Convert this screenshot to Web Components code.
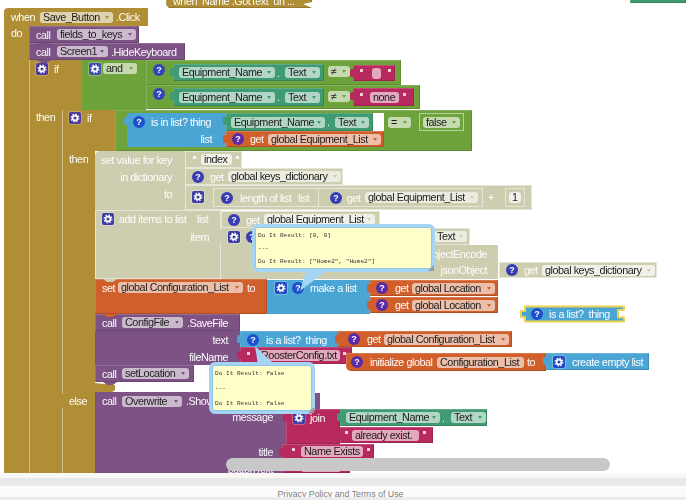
<!DOCTYPE html>
<html lang="en">
<head>
<meta charset="utf-8">
<title>Blocks workspace</title>
<style>
html,body{margin:0;padding:0;background:#fff;overflow:hidden}
body{width:686px;height:500px;font-family:"Liberation Sans",Arial,sans-serif}
</style>
</head>
<body>
<template id="t-block"><style>
:host{position:absolute;box-sizing:border-box;display:flex;align-items:center;background:var(--c);color:#fff;
 box-shadow:inset 1px 1px 0 rgba(255,255,255,.16),inset -1px -1px 0 rgba(0,0,0,.14)}
:host([flat]){box-shadow:none}
:host([line]){box-shadow:inset 1px 0 0 rgba(255,255,255,.42)}
:host([out]){box-shadow:inset 0 0 0 1px rgba(255,255,255,.5)}
:host([tab])::before{content:"";position:absolute;left:-3px;top:4px;width:4px;height:8px;background:var(--c);border-radius:2px 0 0 2px}
:host([notch])::after{content:"";position:absolute;left:8px;bottom:-3px;width:14px;height:3px;background:var(--c);clip-path:polygon(0 0,100% 0,70% 100%,30% 100%);z-index:1}
</style><slot></slot></template>

<template id="t-label"><style>
:host{display:block;flex:none;font-size:10.8px;line-height:12px;letter-spacing:-.45px;white-space:pre;color:inherit;opacity:.97}
</style><slot></slot></template>

<template id="t-field"><style>
:host{display:flex;align-items:center;flex:none;box-sizing:border-box;height:11px;padding:0 3px;border-radius:3px;background:rgba(255,255,255,.6);
 color:#1c1c1c;font-size:10.8px;line-height:11px;letter-spacing:-.45px;white-space:pre;position:relative;overflow:hidden}
i{position:absolute;right:4px;top:4px;width:0;height:0;border:2px solid transparent;border-top:3px solid var(--c);border-bottom:0}
:host([nc]) i{display:none}
</style><slot></slot><i></i></template>

<template id="t-help"><style>
:host{display:block;flex:none;width:12px;height:12px;border-radius:50%;background:var(--ic,#3a3cb4);color:#fff;font:bold 9px/12px "Liberation Sans",Arial,sans-serif;text-align:center}
</style>?</template>

<template id="t-gear"><style>
:host{display:block;flex:none;width:12px;height:12px;border-radius:2px;background:var(--ic,#3d3da8);box-shadow:0 0 0 1px rgba(255,255,255,.25)}
svg{display:block}
</style><svg width="12" height="12" viewBox="0 0 12 12"><circle cx="6" cy="6" r="2.4" fill="none" stroke="#fff" stroke-width="1.7"/><circle cx="6" cy="6" r="3.9" fill="none" stroke="#fff" stroke-width="1.1" stroke-dasharray="1.6 1.45"/></svg></template>

<template id="t-quote"><style>
:host{display:block;flex:none;width:3px;height:3px;margin-top:-5px;background:rgba(255,255,255,.78)}
</style></template>

<template id="t-tip"><style>
:host{position:absolute;box-sizing:border-box;display:flex;flex-direction:column;justify-content:space-between;background:#ffffc9;border:3px solid #a5d5f2;border-radius:6px;
 box-shadow:0 0 0 1px #8cc6ea inset;padding:5px 3px 3px;font:6.1px/8px "Liberation Mono","Courier New",monospace;color:#333;white-space:pre;z-index:5}
svg{position:absolute;left:-3px;top:-3px;overflow:visible;pointer-events:none}
b{position:absolute;right:-2px;bottom:-2px;border:3px solid transparent;border-right-color:#9a9a9a;border-bottom-color:#9a9a9a}
</style><svg width="1" height="1"><polygon fill="#a5d5f2"/></svg><slot></slot><b></b></template>

<template id="t-hl"><style>
:host{position:absolute;left:519px;top:305px;width:106px;height:18px;display:flex;align-items:center;padding-left:12px;box-sizing:border-box;color:#fff}
svg{position:absolute;left:0;top:0}
::slotted(*){position:relative}
</style><svg width="106" height="18" viewBox="0 0 106 18"><path d="M6 1.5H105V5H99V12.5H105V16.5H6V12H2V6H6Z" fill="#4aa5d5" stroke="#ecd24f" stroke-width="2" stroke-linejoin="round"/></svg><slot></slot></template>

<template id="t-canvas"><style>
:host{display:block;position:relative;width:686px;height:473px;overflow:hidden;background:#fff;filter:blur(.3px);
 --gold:#b08e35;--purple:#7d5386;--green:#6ea33c;--teal:#409a72;--pink:#b7295f;--blue:#4aa5d5;--orange:#d05f2c;--beige:#cdcdb0}
</style><slot></slot></template>

<template id="t-scroll"><style>
:host{position:absolute;left:226px;top:458px;width:384px;height:13px;border-radius:7px;background:#c8c8c8;z-index:6}
</style></template>

<template id="t-footer"><style>
:host{display:flex;flex-direction:column;height:27px;overflow:hidden;background:#f8f8f6;color:#7f7f7f;font:8.8px/12px "Liberation Sans",Arial,sans-serif}
.band{height:8px;margin-top:5px;background:#e9e9e9;flex:none}
.txt{flex:none;height:9px;overflow:visible;text-align:center;padding-top:2px;padding-right:5px;background:#fbfbfb;box-sizing:content-box}
.bar{flex:1;background:#ececec;position:relative;z-index:1}
</style><div class="band"></div><div class="txt"><slot></slot></div><div class="bar"></div></template>

<ai-canvas>
  <!-- loose blocks at the top -->
  <ai-b x="166" y="-7" w="146" h="15" c="gold" pl="7" cut><ai-l>when  Name .GotText  un ...</ai-l></ai-b>
  <ai-b x="630" y="-1" w="56" h="4" c="teal"></ai-b>

  <!-- when block -->
  <ai-b x="4" y="26" w="25" h="447" c="gold" pt="1" pl="7" flat><ai-l>do</ai-l></ai-b>
  <ai-b x="4" y="8" w="144" h="18" c="gold" pl="7" flat rad="4 0 0 0"><ai-l w="29">when</ai-l><ai-f w="73">Save_Button</ai-f><ai-l ml="3">.Click</ai-l></ai-b>
  <ai-b x="29" y="26" w="110" h="17" c="purple" pl="7" notch><ai-l w="21">call</ai-l><ai-f w="79">fields_to_keys</ai-f></ai-b>
  <ai-b x="29" y="43" w="156" h="17" c="purple" pl="7" notch><ai-l w="21">call</ai-l><ai-f w="51">Screen1</ai-f><ai-l ml="3">.HideKeyboard</ai-l></ai-b>

  <!-- outer if -->
  <ai-b x="29" y="110" w="33" h="363" c="gold" pl="7" pt="1" line><ai-l>then</ai-l></ai-b>
  <ai-b x="29" y="60" w="53" h="50" c="gold" pl="7" pt="3" line><ai-g ic="#4b3a9c"></ai-g><ai-l ml="6">if</ai-l></ai-b>
  <ai-b x="82" y="60" w="64" h="50" c="green" pl="7" pt="3" flat><ai-g ic="#3f4cb0"></ai-g><ai-f ml="2" w="34" style="--c:#6ea33c">and</ai-f></ai-b>
  <ai-b x="146" y="60" w="255" h="25" c="green" pl="7" pt="4"><ai-h ic="#2f45b8"></ai-h></ai-b>
  <ai-b x="146" y="85" w="274" h="24" c="green" pl="7" pt="3"><ai-h ic="#2f45b8"></ai-h></ai-b>
  <ai-b x="173" y="64" w="151" h="17" c="teal" pl="6" tab><ai-f w="96">Equipment_Name</ai-f><ai-l ml="2" w="8">.</ai-l><ai-f w="35">Text</ai-f></ai-b>
  <ai-f abs x="328" y="66" w="22" style="--c:#6ea33c">≠</ai-f>
  <ai-b x="353" y="65" w="42" h="16" c="pink" pl="7" tab><ai-q></ai-q><ai-f nc ml="9" w="9"></ai-f><ai-q ml="7"></ai-q></ai-b>
  <ai-b x="173" y="88" w="151" h="18" c="teal" pl="6" tab><ai-f w="96">Equipment_Name</ai-f><ai-l ml="2" w="8">.</ai-l><ai-f w="35">Text</ai-f></ai-b>
  <ai-f abs x="328" y="91" w="22" style="--c:#6ea33c">≠</ai-f>
  <ai-b x="353" y="88" w="61" h="18" c="pink" pl="7" tab><ai-q></ai-q><ai-f nc ml="7" w="29">none</ai-f><ai-q ml="4"></ai-q></ai-b>

  <!-- inner if -->
  <ai-b x="62" y="151" w="33" h="322" c="gold" pl="7" pt="2" line><ai-l>then</ai-l></ai-b>
  <ai-b x="62" y="394" w="33" h="14" c="gold" pl="7" flat><ai-l>else</ai-l></ai-b>
  <ai-b x="62" y="110" w="53" h="41" c="gold" pl="7" pt="2" line><ai-g ic="#4b3a9c"></ai-g><ai-l ml="6">if</ai-l></ai-b>
  <ai-b x="115" y="110" w="357" h="41" c="green"></ai-b>
  <ai-b x="127" y="113" w="99" h="17" c="blue" pl="6" flat tab><ai-h ic="#1c50cf"></ai-h><ai-l ml="6">is in list? thing</ai-l></ai-b>
  <ai-b x="127" y="130" w="99" h="17" c="blue" end="14" flat><ai-l>list</ai-l></ai-b>
  <ai-b x="226" y="113" w="147" h="18" c="teal" pl="5" tab><ai-f w="94">Equipment_Name</ai-f><ai-l ml="2" w="8">.</ai-l><ai-f w="34">Text</ai-f></ai-b>
  <ai-b x="373" y="113" w="11" h="18" c="white" flat></ai-b>
  <ai-b x="226" y="131" w="158" h="16" c="orange" pl="6" tab><ai-h ic="#5b2aa6"></ai-h><ai-l ml="6" w="18">get</ai-l><ai-f w="113">global Equipment_List</ai-f></ai-b>
  <ai-f abs x="388" y="117" w="23" style="--c:#6ea33c">=</ai-f>
  <ai-b x="419" y="113" w="45" h="18" c="green" pl="4" out><ai-f w="37" style="--c:#6ea33c">false</ai-f></ai-b>

  <!-- set value for key -->
  <ai-b x="95" y="151" w="90" h="59" c="beige" flat rad="5 0 0 0"></ai-b>
  <ai-b x="96" y="153" w="89" h="14" c="beige" end="13" flat><ai-l>set value for key</ai-l></ai-b>
  <ai-b x="95" y="170" w="90" h="14" c="beige" end="13" flat><ai-l>in dictionary</ai-l></ai-b>
  <ai-b x="95" y="187" w="90" h="14" c="beige" end="13" flat><ai-l>to</ai-l></ai-b>
  <ai-b x="185" y="151" w="57" h="17" c="beige" pl="4" out><ai-q ml="4"></ai-q><ai-f nc ml="5" w="31" style="background:rgba(255,255,255,.72)">index</ai-f><ai-q ml="4"></ai-q></ai-b>
  <ai-b x="185" y="168" w="158" h="17" c="beige" pl="7" out><ai-h></ai-h><ai-l ml="6" w="18">get</ai-l><ai-f w="113">global keys_dictionary</ai-f></ai-b>
  <ai-b x="185" y="185" w="347" h="25" c="beige" pl="7" pt="6" out><ai-g></ai-g></ai-b>
  <ai-b x="213" y="188" w="270" h="19" c="beige" pl="8" out><ai-h></ai-h><ai-l ml="7" w="58">length of list</ai-l><ai-l w="20">list</ai-l></ai-b>
  <ai-b x="318" y="188" w="165" h="19" c="beige" pl="12" out><ai-h></ai-h><ai-l ml="5" w="18">get</ai-l><ai-f w="113">global Equipment_List</ai-f></ai-b>
  <ai-b x="488" y="190" w="12" h="14" c="beige" flat><ai-l>+</ai-l></ai-b>
  <ai-b x="505" y="188" w="20" h="19" c="beige" pl="4" out><ai-f nc w="12" style="background:rgba(255,255,255,.72);padding:0 3px">1</ai-f></ai-b>

  <!-- add items to list -->
  <ai-b x="95" y="210" w="126" h="69" c="beige" pl="7" pt="3" notch out><ai-g></ai-g><ai-l ml="5" w="78">add items to list</ai-l><ai-l>list</ai-l></ai-b>
  <ai-b x="150" y="230" w="71" h="14" c="beige" end="12" flat><ai-l>item</ai-l></ai-b>
  <ai-b x="221" y="211" w="159" h="17" c="beige" pl="7" out><ai-h></ai-h><ai-l ml="6" w="18">get</ai-l><ai-f w="111" style="background:rgba(255,255,255,.72)">global Equipment_List</ai-f></ai-b>
  <ai-b x="221" y="228" w="249" h="51" c="beige" pl="7" pt="3" flat><ai-g></ai-g><ai-h ml="6"></ai-h></ai-b>
  <ai-b x="431" y="228" w="39" h="17" c="beige" pl="3" out><ai-f w="33" style="background:rgba(255,255,255,.62)">Text</ai-f></ai-b>
  <ai-b x="400" y="245" w="98" h="34" c="beige" flat></ai-b>
  <ai-b x="400" y="247" w="98" h="14" c="beige" end="11" flat><ai-l>objectEncode</ai-l></ai-b>
  <ai-b x="400" y="263" w="98" h="14" c="beige" end="11" flat><ai-l>jsonObject</ai-l></ai-b>
  <ai-b x="499" y="262" w="158" h="16" c="beige" pl="7" out><ai-h></ai-h><ai-l ml="6" w="18">get</ai-l><ai-f w="113" style="background:rgba(255,255,255,.72)">global keys_dictionary</ai-f></ai-b>

  <!-- set global -->
  <ai-b x="95" y="279" w="172" h="35" c="orange" pl="7" pt="3" notch><ai-l w="16">set</ai-l><ai-f w="125">global Configuration_List</ai-f><ai-l ml="4">to</ai-l></ai-b>
  <ai-b x="267" y="280" w="103" h="34" c="blue" pl="8" pt="2" flat><ai-g ic="#2248c4"></ai-g><ai-h ml="5" ic="#1c50cf"></ai-h><ai-l ml="6">make a list</ai-l></ai-b>
  <ai-b x="370" y="280" w="128" h="16" c="orange" pl="6" tab><ai-h ic="#5b2aa6"></ai-h><ai-l ml="7" w="17">get</ai-l><ai-f w="83">global Location</ai-f></ai-b>
  <ai-b x="370" y="297" w="128" h="16" c="orange" pl="6" tab><ai-h ic="#5b2aa6"></ai-h><ai-l ml="7" w="17">get</ai-l><ai-f w="83">global Location</ai-f></ai-b>

  <!-- loose highlighted block -->
  <ai-hl><ai-h ic="#1c50cf"></ai-h><ai-l ml="6">is a list?  thing</ai-l></ai-hl>

  <!-- call ConfigFile -->
  <ai-b x="95" y="314" w="145" h="17" c="purple" pl="7" notch><ai-l w="20">call</ai-l><ai-f w="61">ConfigFile</ai-f><ai-l ml="4">.SaveFile</ai-l></ai-b>
  <ai-b x="95" y="331" w="145" h="17" c="purple" end="12" flat><ai-l>text</ai-l></ai-b>
  <ai-b x="95" y="348" w="145" h="17" c="purple" end="12" flat><ai-l>fileName</ai-l></ai-b>
  <ai-b x="240" y="331" w="98" h="17" c="blue" pl="7" tab><ai-h ic="#1c50cf"></ai-h><ai-l ml="7">is a list?  thing</ai-l></ai-b>
  <ai-b x="338" y="331" w="174" h="16" c="orange" pl="10" tab><ai-h ic="#5b2aa6"></ai-h><ai-l ml="7" w="17">get</ai-l><ai-f w="125">global Configuration_List</ai-f></ai-b>
  <ai-b x="240" y="347" w="112" h="17" c="pink" pl="5" tab><ai-q ml="2"></ai-q><ai-f nc ml="8" w="82">RoosterConfig.txt</ai-f><ai-q ml="3"></ai-q></ai-b>
  <ai-b x="346" y="353" w="200" h="18" c="orange" pl="5" rad="0 0 0 5"><ai-h ic="#5b2aa6"></ai-h><ai-l ml="7" w="67">initialize global</ai-l><ai-f nc w="87">Configuration_List</ai-f><ai-l ml="3">to</ai-l></ai-b>
  <ai-b x="546" y="353" w="103" h="17" c="blue" pl="7" tab><ai-g ic="#2248c4"></ai-g><ai-l ml="7">create empty list</ai-l></ai-b>

  <ai-b x="95" y="365" w="99" h="17" c="purple" pl="7" notch><ai-l w="20">call</ai-l><ai-f w="67">setLocation</ai-f></ai-b>
  <ai-b x="95" y="383" w="20" h="10" c="gold" flat cutn></ai-b>

  <!-- else: call Overwrite -->
  <ai-b x="95" y="392" w="191" h="81" c="purple" flat></ai-b>
  <ai-b x="95" y="393" w="225" h="16" c="purple" pl="7" flat><ai-l w="20">call</ai-l><ai-f w="60">Overwrite</ai-f><ai-l ml="4">.Show</ai-l></ai-b>
  <ai-b x="95" y="410" w="191" h="14" c="purple" end="13" flat><ai-l>message</ai-l></ai-b>
  <ai-b x="95" y="445" w="191" h="14" c="purple" end="13" flat><ai-l>title</ai-l></ai-b>
  <ai-b x="95" y="462" w="191" h="14" c="purple" end="13" flat><ai-l>buttonText</ai-l></ai-b>
  <ai-b x="286" y="409" w="54" h="35" c="pink" pl="7" pt="3" tab><ai-g ic="#3d3da8"></ai-g><ai-l ml="5">join</ai-l></ai-b>
  <ai-b x="340" y="409" w="147" h="17" c="teal" pl="6" tab><ai-f w="94">Equipment_Name</ai-f><ai-l ml="2" w="9">.</ai-l><ai-f w="35">Text</ai-f></ai-b>
  <ai-b x="340" y="427" w="93" h="16" c="pink" pl="5" tab><ai-q></ai-q><ai-f nc ml="4" w="67">already exist.</ai-f><ai-q ml="4"></ai-q></ai-b>
  <ai-b x="282" y="444" w="92" h="15" c="pink" pl="7" tab><ai-q ml="3"></ai-q><ai-f nc ml="6" w="62">Name Exists</ai-f><ai-q ml="4"></ai-q></ai-b>
  <ai-b x="282" y="459" w="68" h="14" c="pink" pl="7" tab><ai-q ml="3"></ai-q><ai-f nc ml="6" w="40">Cancel</ai-f></ai-b>

  <!-- do-it results -->
  <ai-tip x="252" y="224" w="183" h="48" tail="54,47 74,47 48,67"><span>Do It Result: [0, 0]</span><span>---</span><span>Do It Result: ["Home2", "Home2"]</span></ai-tip>
  <ai-tip x="209" y="362" w="106" h="52" tail="46,-16 49,3 66,3"><span>Do It Result: false</span><span>---</span><span>Do It Result: false</span></ai-tip>

  <ai-scroll></ai-scroll>
</ai-canvas>
<ai-footer>Privacy Policy and Terms of Use</ai-footer>

<script>
function mount(host,id){
  const r=host.attachShadow({mode:'open'});
  r.appendChild(document.getElementById(id).content.cloneNode(true));
  return r;
}
function size(el){
  const a=n=>el.getAttribute(n);
  if(a('w')) el.style.width=a('w')+'px';
  if(a('ml')) el.style.marginLeft=a('ml')+'px';
  if(a('ic')) el.style.setProperty('--ic',a('ic'));
}
class AiCanvas extends HTMLElement{constructor(){super();mount(this,'t-canvas');}}
class AiBlock extends HTMLElement{
  constructor(){super();mount(this,'t-block');}
  connectedCallback(){
    const s=this.style,a=n=>this.getAttribute(n);
    s.left=a('x')+'px';s.top=a('y')+'px';s.width=a('w')+'px';s.height=a('h')+'px';
    const c=a('c');s.setProperty('--c',c==='white'?'#fff':'var(--'+c+')');
    if(a('pl'))s.paddingLeft=a('pl')+'px';
    if(a('pt')){s.paddingTop=a('pt')+'px';s.alignItems='flex-start';}
    if(a('end')){s.justifyContent='flex-end';s.paddingRight=a('end')+'px';}
    if(a('rad'))s.borderRadius=a('rad').split(' ').map(v=>v+'px').join(' ');
    if(this.hasAttribute('cut'))s.clipPath='polygon(0 0,100% 0,100% 9px,94% 11px,100% 15px,3px 15px,0 12px)';
    if(this.hasAttribute('cutn'))s.clipPath='polygon(0 0,100% 20%,100% 70%,80% 100%,0 100%)';
  }
}
class AiLabel extends HTMLElement{constructor(){super();mount(this,'t-label');}connectedCallback(){size(this);}}
class AiField extends HTMLElement{
  constructor(){super();mount(this,'t-field');}
  connectedCallback(){
    size(this);
    if(this.hasAttribute('abs')){this.style.position='absolute';this.style.left=this.getAttribute('x')+'px';this.style.top=this.getAttribute('y')+'px';}
  }
}
class AiHelp extends HTMLElement{constructor(){super();mount(this,'t-help');}connectedCallback(){size(this);}}
class AiGear extends HTMLElement{constructor(){super();mount(this,'t-gear');}connectedCallback(){size(this);}}
class AiQuote extends HTMLElement{constructor(){super();mount(this,'t-quote');}connectedCallback(){size(this);}}
class AiTip extends HTMLElement{
  constructor(){super();this.r=mount(this,'t-tip');}
  connectedCallback(){
    const s=this.style,a=n=>this.getAttribute(n);
    s.left=a('x')+'px';s.top=a('y')+'px';s.width=a('w')+'px';s.height=a('h')+'px';
    this.r.querySelector('polygon').setAttribute('points',a('tail'));
  }
}
class AiHl extends HTMLElement{constructor(){super();mount(this,'t-hl');}}
class AiScroll extends HTMLElement{constructor(){super();mount(this,'t-scroll');}}
class AiFooter extends HTMLElement{constructor(){super();mount(this,'t-footer');}}
customElements.define('ai-canvas',AiCanvas);
customElements.define('ai-b',AiBlock);
customElements.define('ai-l',AiLabel);
customElements.define('ai-f',AiField);
customElements.define('ai-h',AiHelp);
customElements.define('ai-g',AiGear);
customElements.define('ai-q',AiQuote);
customElements.define('ai-tip',AiTip);
customElements.define('ai-hl',AiHl);
customElements.define('ai-scroll',AiScroll);
customElements.define('ai-footer',AiFooter);
</script>
</body>
</html>
